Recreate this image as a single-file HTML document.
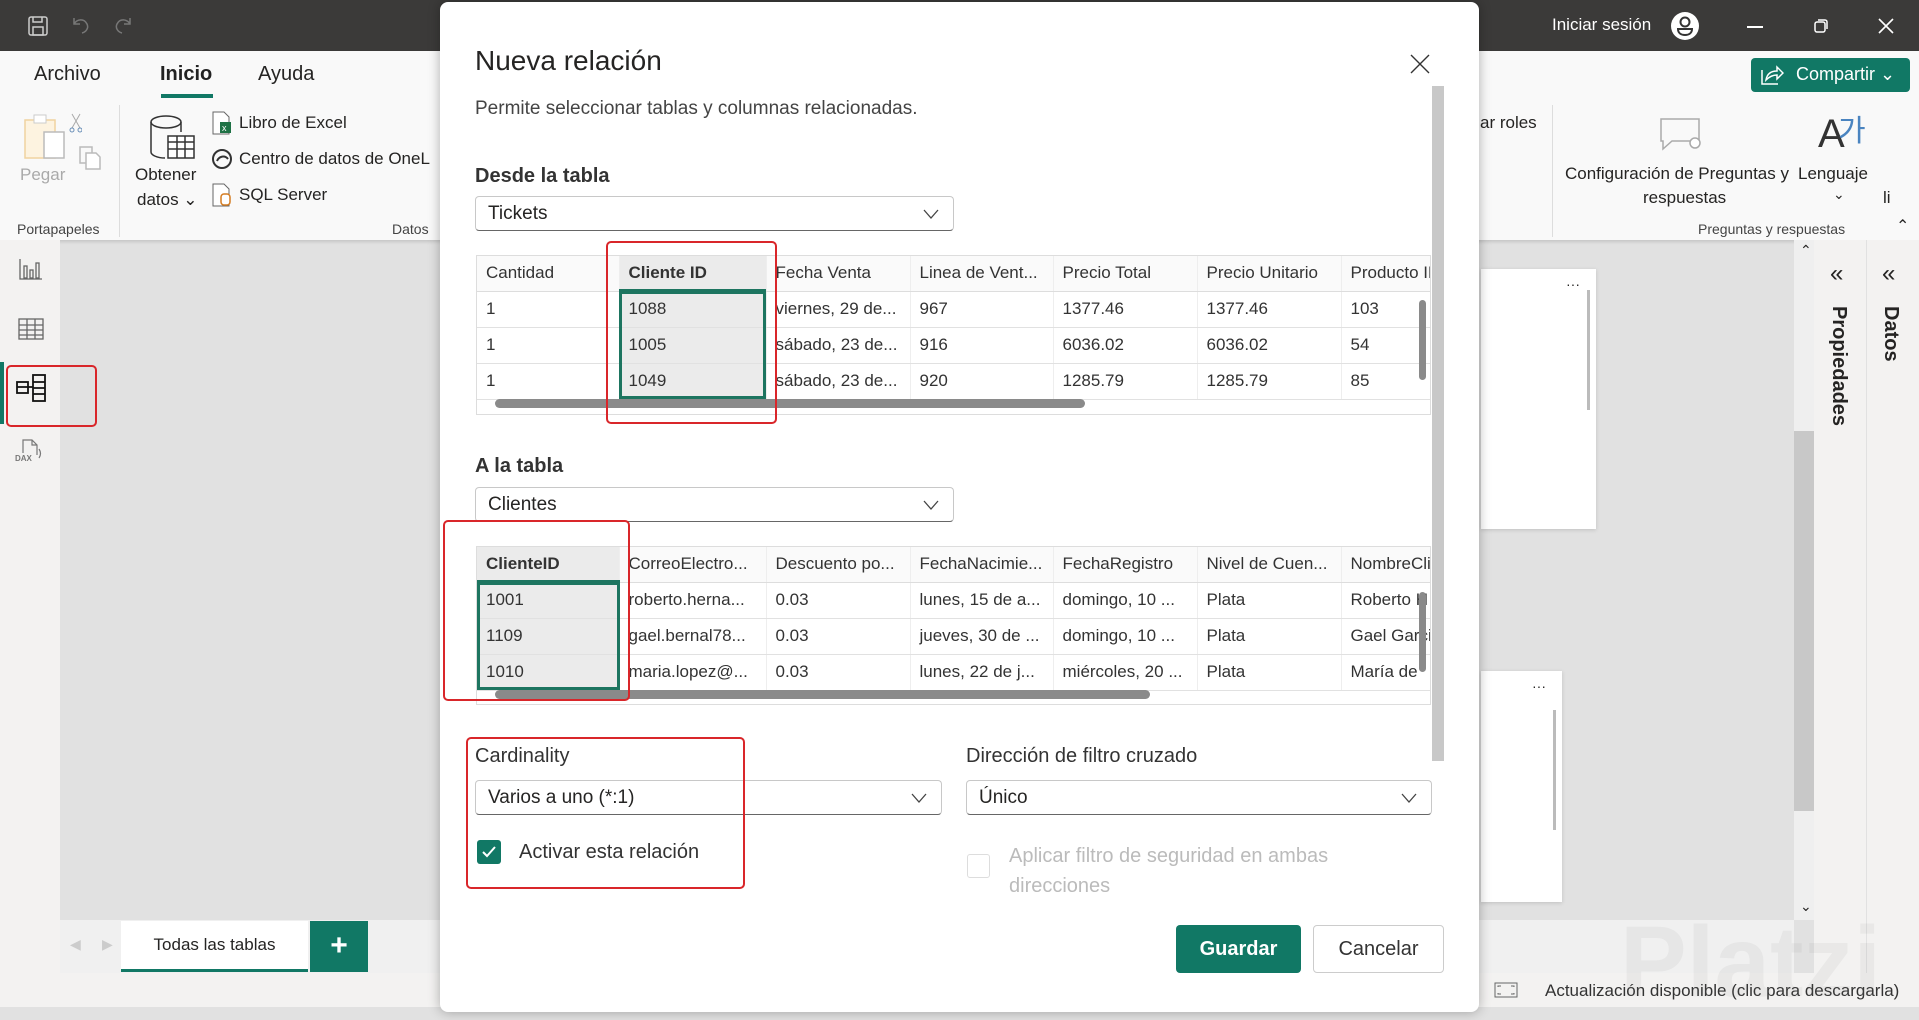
<!DOCTYPE html>
<html><head><meta charset="utf-8"><style>
*{box-sizing:border-box;margin:0;padding:0}
body{width:1919px;height:1007px;position:relative;overflow:hidden;font-family:"Liberation Sans",sans-serif;background:#e1e1e1;color:#252423}
.a{position:absolute;white-space:nowrap}
.dd{position:absolute;border:1px solid #c8c8c8;border-bottom:1px solid #666;border-radius:4px;background:#fff;font-size:19px;padding-left:12px;line-height:33px}
.dd .ch{position:absolute;right:14px;top:8px;width:16px;height:16px}
table{border-collapse:collapse;table-layout:fixed;font-size:17px;color:#333}
td{height:36px;padding-left:9px;border-bottom:1px solid #e1e1e1;border-right:1px solid #eee;overflow:hidden;white-space:nowrap}
tr.h td{height:35px;background:#fafafa;border-bottom:1px solid #ddd}
.sel{background:#ebebeb !important}
.red{position:absolute;border:2px solid #d9262a;border-radius:5px}
</style></head><body>
<!-- title bar -->
<div class="a" style="left:0;top:0;width:1919px;height:51px;background:#3b3a39"></div>
<svg class="a" style="left:26px;top:14px" width="24" height="24" viewBox="0 0 24 24" fill="none" stroke="#ccc" stroke-width="1.5"><rect x="3" y="3" width="18" height="18" rx="2"/><rect x="7" y="13" width="10" height="8"/><path d="M7 3v5h9V3"/></svg>
<svg class="a" style="left:70px;top:14px" width="22" height="22" viewBox="0 0 22 22" fill="none" stroke="#777" stroke-width="1.5"><path d="M4 4v6h6M4 10c3-5 10-6 13 0 2 4-1 8-5 9"/></svg>
<svg class="a" style="left:112px;top:14px" width="22" height="22" viewBox="0 0 22 22" fill="none" stroke="#777" stroke-width="1.5"><path d="M18 4v6h-6M18 10c-3-5-10-6-13 0-2 4 1 8 5 9"/></svg>
<div class="a" style="left:1552px;top:15px;color:#fff;font-size:17px">Iniciar sesión</div>
<svg class="a" style="left:1670px;top:11px" width="30" height="30" viewBox="0 0 30 30"><circle cx="15" cy="15" r="14" fill="#fff"/><circle cx="15" cy="11" r="4.5" fill="none" stroke="#333" stroke-width="2"/><path d="M8 18h14c0 4-3 6-7 6s-7-2-7-6z" fill="none" stroke="#333" stroke-width="2"/></svg>
<div class="a" style="left:1747px;top:26px;width:16px;height:1.5px;background:#fff"></div>
<svg class="a" style="left:1813px;top:18px" width="16" height="16" viewBox="0 0 16 16" fill="none" stroke="#fff" stroke-width="1.5"><rect x="2" y="4" width="10" height="10" rx="2"/><path d="M5 2h7a2 2 0 0 1 2 2v7"/></svg>
<svg class="a" style="left:1878px;top:18px" width="16" height="16" viewBox="0 0 16 16" stroke="#fff" stroke-width="1.6"><path d="M1 1l14 14M15 1L1 15"/></svg>
<!-- ribbon -->
<div class="a" style="left:0;top:51px;width:1919px;height:189px;background:#f9f9f9;box-shadow:0 2px 3px rgba(0,0,0,.12)"></div>
<div class="a" style="left:34px;top:63px;font-size:20px">Archivo</div>
<div class="a" style="left:160px;top:63px;font-size:20px;font-weight:bold;color:#222">Inicio</div>
<div class="a" style="left:161px;top:94px;width:52px;height:4px;background:#117865"></div>
<div class="a" style="left:258px;top:63px;font-size:20px">Ayuda</div>
<svg class="a" style="left:22px;top:112px" width="60" height="50" viewBox="0 0 60 50" fill="none"><rect x="3" y="8" width="30" height="38" fill="#fdf3e0" stroke="#f0d3a0" stroke-width="1.5"/><rect x="12" y="3" width="12" height="8" fill="#fff" stroke="#ccc"/><rect x="22" y="20" width="20" height="26" fill="#fff" stroke="#bbb" stroke-width="1.5"/><path d="M58 2l-8 14M50 2l8 14" stroke="#aaa"/><circle cx="50" cy="18" r="2" stroke="#6a8fb8"/><circle cx="58" cy="18" r="2" stroke="#6a8fb8"/></svg>
<svg class="a" style="left:78px;top:145px" width="24" height="26" viewBox="0 0 24 26" fill="none" stroke="#bbb" stroke-width="1.5"><rect x="2" y="2" width="12" height="16"/><path d="M8 8h10l4 4v12H8z" fill="#fff"/></svg>
<div class="a" style="left:20px;top:165px;font-size:17px;color:#aaa">Pegar</div>
<div class="a" style="left:17px;top:221px;font-size:14px;color:#444">Portapapeles</div>
<div class="a" style="left:119px;top:105px;width:1px;height:132px;background:#ddd"></div>
<svg class="a" style="left:148px;top:114px" width="48" height="48" viewBox="0 0 48 48" fill="none" stroke="#333" stroke-width="1.5"><ellipse cx="18" cy="8" rx="15" ry="6"/><path d="M3 8v30c0 3 6 6 14 6M33 8v10"/><rect x="20" y="22" width="26" height="22" fill="#fff"/><path d="M20 28h26M20 35h26M29 22v22M37 22v22"/></svg>
<div class="a" style="left:135px;top:165px;font-size:17px">Obtener</div>
<div class="a" style="left:137px;top:190px;font-size:17px">datos ⌄</div>
<svg class="a" style="left:211px;top:111px" width="22" height="24" viewBox="0 0 22 24"><path d="M2 1h11l5 5v17H2z" fill="#fff" stroke="#666"/><rect x="9" y="11" width="11" height="11" fill="#1e7145"/><text x="11" y="20" font-size="9" fill="#fff" font-family="Liberation Sans">x</text></svg>
<div class="a" style="left:239px;top:113px;font-size:17px">Libro de Excel</div>
<svg class="a" style="left:211px;top:148px" width="22" height="22" viewBox="0 0 22 22" fill="none" stroke="#333" stroke-width="2"><circle cx="11" cy="11" r="9"/><path d="M6 13c2-5 8-6 11-2"/></svg>
<div class="a" style="left:239px;top:149px;font-size:17px">Centro de datos de OneL</div>
<svg class="a" style="left:211px;top:183px" width="22" height="24" viewBox="0 0 22 24" fill="none"><path d="M2 1h11l5 5v17H2z" fill="#fff" stroke="#666"/><rect x="10" y="11" width="9" height="11" rx="3" stroke="#d47b20" stroke-width="1.5" fill="#fff"/></svg>
<div class="a" style="left:239px;top:185px;font-size:17px">SQL Server</div>
<div class="a" style="left:392px;top:221px;font-size:14px;color:#444">Datos</div>
<!-- ribbon right -->
<div class="a" style="left:1751px;top:58px;width:159px;height:34px;background:#117865;border-radius:4px"></div>
<svg class="a" style="left:1760px;top:64px" width="24" height="22" viewBox="0 0 24 22" fill="none" stroke="#fff" stroke-width="1.5"><path d="M2 6v14h16"/><path d="M6 16c1-6 5-9 11-9V3l6 6-6 6v-4c-5 0-8 2-11 5z"/></svg>
<div class="a" style="left:1796px;top:64px;color:#fff;font-size:18px">Compartir ⌄</div>
<div class="a" style="left:1480px;top:113px;font-size:17px">ar roles</div>
<div class="a" style="left:1552px;top:105px;width:1px;height:132px;background:#ddd"></div>
<svg class="a" style="left:1658px;top:117px" width="46" height="36" viewBox="0 0 46 36" fill="none" stroke="#aaa" stroke-width="1.5"><path d="M3 2h38v22H14l-9 8v-8H3z"/><circle cx="37" cy="26" r="5" fill="#fff"/></svg>
<div class="a" style="left:1818px;top:112px;font-size:40px;color:#333;font-weight:300">A</div>
<div class="a" style="left:1838px;top:106px;font-size:30px;color:#4a84c0">가</div>
<div class="a" style="left:1565px;top:164px;font-size:17px">Configuración de Preguntas y</div>
<div class="a" style="left:1798px;top:164px;font-size:17px">Lenguaje</div>
<div class="a" style="left:1643px;top:188px;font-size:17px">respuestas</div>
<div class="a" style="left:1833px;top:186px;font-size:14px">⌄</div>
<div class="a" style="left:1883px;top:188px;font-size:17px">li</div>
<div class="a" style="left:1698px;top:221px;font-size:14px;color:#444">Preguntas y respuestas</div>
<div class="a" style="left:1896px;top:216px;font-size:16px">⌃</div>
<!-- left nav -->
<div class="a" style="left:0;top:240px;width:60px;height:733px;background:#f3f2f1"></div>
<svg class="a" style="left:19px;top:258px" width="24" height="22" viewBox="0 0 24 22" fill="none" stroke="#666" stroke-width="1.3"><path d="M1 1v20h22"/><rect x="5" y="8" width="3" height="12"/><rect x="11" y="12" width="3" height="8"/><rect x="17" y="5" width="3" height="15"/></svg>
<svg class="a" style="left:18px;top:318px" width="26" height="22" viewBox="0 0 26 22" fill="none" stroke="#666" stroke-width="1.3"><rect x="1" y="1" width="24" height="20"/><path d="M1 7h24M1 12h24M1 17h24M9 1v20M17 1v20"/></svg>
<div class="a" style="left:0;top:362px;width:4px;height:62px;background:#117865"></div>
<svg class="a" style="left:16px;top:374px" width="30" height="28" viewBox="0 0 30 28" fill="none" stroke="#111" stroke-width="1.8"><rect x="1" y="8" width="11" height="11"/><path d="M1 13h11M12 13h5"/><rect x="17" y="1" width="12" height="26"/><path d="M17 8h12M17 14h12M17 20h12"/></svg>
<div class="red" style="left:6px;top:365px;width:91px;height:62px"></div>
<svg class="a" style="left:15px;top:437px" width="28" height="26" viewBox="0 0 28 26" fill="none" stroke="#777" stroke-width="1.2"><path d="M8 16V3h9l5 5v10M17 3v5h5M24 12c2 3 2 6 0 9"/><text x="0" y="24" font-size="8" fill="#777" stroke="none" font-family="Liberation Sans" font-weight="bold">DAX</text></svg>
<!-- canvas cards -->
<div class="a" style="left:1481px;top:269px;width:115px;height:260px;background:#fff;box-shadow:0 1px 4px rgba(0,0,0,.15)"></div>
<div class="a" style="left:1566px;top:276px;font-size:14px">···</div>
<div class="a" style="left:1587px;top:290px;width:3px;height:120px;background:#bbb"></div>
<div class="a" style="left:1481px;top:671px;width:81px;height:231px;background:#fff;box-shadow:0 1px 4px rgba(0,0,0,.15)"></div>
<div class="a" style="left:1532px;top:678px;font-size:14px">···</div>
<div class="a" style="left:1553px;top:710px;width:3px;height:120px;background:#bbb"></div>
<div class="a" style="left:1794px;top:240px;width:20px;height:680px;background:#efefef"></div>
<div class="a" style="left:1794px;top:431px;width:20px;height:380px;background:#c8c8c8"></div>
<div class="a" style="left:1800px;top:242px;font-size:14px">⌃</div>
<div class="a" style="left:1800px;top:898px;font-size:14px">⌄</div>
<div class="a" style="left:1814px;top:240px;width:105px;height:733px;background:#f3f2f1"></div>
<div class="a" style="left:1866px;top:240px;width:1px;height:733px;background:#e1e1e1"></div>
<div class="a" style="left:1830px;top:260px;font-size:24px">«</div>
<div class="a" style="left:1882px;top:260px;font-size:24px">«</div>
<div class="a" style="left:1828px;top:306px;font-size:20px;font-weight:bold;transform-origin:0 0;transform:translate(22px,0) rotate(90deg)">Propiedades</div>
<div class="a" style="left:1880px;top:306px;font-size:20px;font-weight:bold;transform-origin:0 0;transform:translate(22px,0) rotate(90deg)">Datos</div>
<!-- bottom tabs -->
<div class="a" style="left:60px;top:920px;width:1734px;height:53px;background:#f0f0f0"></div>
<div class="a" style="left:70px;top:936px;font-size:14px;color:#ccc">◀</div>
<div class="a" style="left:102px;top:936px;font-size:14px;color:#ccc">▶</div>
<div class="a" style="left:121px;top:921px;width:187px;height:51px;background:#fff;border-bottom:3px solid #117865;font-size:17px;text-align:center;line-height:48px">Todas las tablas</div>
<div class="a" style="left:310px;top:921px;width:58px;height:51px;background:#117865;color:#fff;font-size:30px;text-align:center;line-height:50px;font-weight:bold">+</div>
<div class="a" style="left:0;top:973px;width:1919px;height:34px;background:#f3f2f1"></div>
<svg class="a" style="left:1494px;top:982px" width="24" height="16" viewBox="0 0 24 16" fill="none" stroke="#666"><rect x="1" y="1" width="22" height="14"/><path d="M4 5V4h3M20 5V4h-3M4 11v1h3M20 11v1h-3"/></svg>
<div class="a" style="left:1545px;top:981px;font-size:17px;color:#333">Actualización disponible (clic para descargarla)</div>
<div class="a" style="left:1620px;top:905px;font-size:100px;color:rgba(120,120,120,.08);font-weight:bold">Platzi</div>
<!-- dialog -->
<div class="a" style="left:440px;top:2px;width:1039px;height:1010px;background:#fff;border-radius:8px;box-shadow:0 0 12px rgba(0,0,0,.3)"></div>
<div class="a" style="left:475px;top:45px;font-size:28px;color:#252423">Nueva relación</div>
<svg class="a" style="left:1410px;top:54px" width="20" height="20" viewBox="0 0 20 20" stroke="#333" stroke-width="1.4"><path d="M1 1l18 18M19 1L1 19"/></svg>
<div class="a" style="left:1432px;top:86px;width:12px;height:675px;background:#c8c8c8"></div>
<div class="a" style="left:475px;top:98px;font-size:19px;color:#444">Permite seleccionar tablas y columnas relacionadas.</div>
<div class="a" style="left:475px;top:165px;font-size:20px;font-weight:bold;color:#333">Desde la tabla</div>
<div class="dd" style="left:475px;top:196px;width:479px;height:35px">Tickets<svg class="ch" viewBox="0 0 16 16" fill="none" stroke="#444" stroke-width="1.3"><path d="M1 5l7 8 7-8"/></svg></div>
<div class="a" style="left:476px;top:255px;width:955px;height:160px;border:1px solid #ddd;overflow:hidden;background:#fff">
<table style="width:1100px"><colgroup><col style="width:142px"><col style="width:147px"><col style="width:144px"><col style="width:143px"><col style="width:144px"><col style="width:144px"><col style="width:236px"></colgroup>
<tr class="h"><td>Cantidad</td><td class="sel" style="font-weight:bold">Cliente ID</td><td>Fecha Venta</td><td>Linea de Vent...</td><td>Precio Total</td><td>Precio Unitario</td><td>Producto ID</td></tr>
<tr><td>1</td><td class="sel">1088</td><td>viernes, 29 de...</td><td>967</td><td>1377.46</td><td>1377.46</td><td>103</td></tr>
<tr><td>1</td><td class="sel">1005</td><td>sábado, 23 de...</td><td>916</td><td>6036.02</td><td>6036.02</td><td>54</td></tr>
<tr><td>1</td><td class="sel">1049</td><td>sábado, 23 de...</td><td>920</td><td>1285.79</td><td>1285.79</td><td>85</td></tr>
</table></div>
<div class="a" style="left:619px;top:289px;width:147px;height:110px;border:3px solid #1d7560;border-top-width:5px"></div>
<div class="a" style="left:495px;top:399px;width:590px;height:9px;background:#8a8a8a;border-radius:5px"></div>
<div class="a" style="left:1419px;top:300px;width:7px;height:80px;background:#8a8a8a;border-radius:4px"></div>
<div class="red" style="left:606px;top:241px;width:171px;height:183px"></div>
<div class="a" style="left:475px;top:455px;font-size:20px;font-weight:bold;color:#333">A la tabla</div>
<div class="dd" style="left:475px;top:487px;width:479px;height:35px">Clientes<svg class="ch" viewBox="0 0 16 16" fill="none" stroke="#444" stroke-width="1.3"><path d="M1 5l7 8 7-8"/></svg></div>
<div class="a" style="left:476px;top:546px;width:955px;height:159px;border:1px solid #ddd;overflow:hidden;background:#fff">
<table style="width:1100px"><colgroup><col style="width:142px"><col style="width:147px"><col style="width:144px"><col style="width:143px"><col style="width:144px"><col style="width:144px"><col style="width:236px"></colgroup>
<tr class="h"><td class="sel" style="font-weight:bold">ClienteID</td><td>CorreoElectro...</td><td>Descuento po...</td><td>FechaNacimie...</td><td>FechaRegistro</td><td>Nivel de Cuen...</td><td>NombreCliente</td></tr>
<tr><td class="sel">1001</td><td>roberto.herna...</td><td>0.03</td><td>lunes, 15 de a...</td><td>domingo, 10 ...</td><td>Plata</td><td>Roberto H</td></tr>
<tr><td class="sel">1109</td><td>gael.bernal78...</td><td>0.03</td><td>jueves, 30 de ...</td><td>domingo, 10 ...</td><td>Plata</td><td>Gael Garcia</td></tr>
<tr><td class="sel">1010</td><td>maria.lopez@...</td><td>0.03</td><td>lunes, 22 de j...</td><td>miércoles, 20 ...</td><td>Plata</td><td>María de</td></tr>
</table></div>
<div class="a" style="left:477px;top:580px;width:143px;height:110px;border:3px solid #1d7560;border-top-width:5px"></div>
<div class="a" style="left:495px;top:690px;width:655px;height:9px;background:#8a8a8a;border-radius:5px"></div>
<div class="a" style="left:1419px;top:592px;width:7px;height:80px;background:#8a8a8a;border-radius:4px"></div>
<div class="red" style="left:443px;top:520px;width:187px;height:181px"></div>
<div class="a" style="left:475px;top:745px;font-size:20px;color:#333">Cardinality</div>
<div class="a" style="left:966px;top:745px;font-size:20px;color:#333">Dirección de filtro cruzado</div>
<div class="dd" style="left:475px;top:780px;width:467px;height:35px">Varios a uno (*:1)<svg class="ch" viewBox="0 0 16 16" fill="none" stroke="#444" stroke-width="1.3"><path d="M1 5l7 8 7-8"/></svg></div>
<div class="dd" style="left:966px;top:780px;width:466px;height:35px">Único<svg class="ch" viewBox="0 0 16 16" fill="none" stroke="#444" stroke-width="1.3"><path d="M1 5l7 8 7-8"/></svg></div>
<div class="a" style="left:477px;top:840px;width:24px;height:24px;background:#117865;border-radius:3px"></div>
<svg class="a" style="left:481px;top:845px" width="16" height="14" viewBox="0 0 16 14" fill="none" stroke="#fff" stroke-width="2"><path d="M2 7l4 4 8-9"/></svg>
<div class="a" style="left:519px;top:841px;font-size:20px;color:#333">Activar esta relación</div>
<div class="red" style="left:466px;top:737px;width:279px;height:152px"></div>
<div class="a" style="left:967px;top:854px;width:23px;height:24px;border:1px solid #ddd;border-radius:3px"></div>
<div class="a" style="left:1009px;top:841px;font-size:20px;color:#bbb;line-height:30px">Aplicar filtro de seguridad en ambas<br>direcciones</div>
<div class="a" style="left:1176px;top:925px;width:125px;height:48px;background:#117865;border-radius:4px;color:#fff;font-size:20px;font-weight:bold;text-align:center;line-height:48px">Guardar</div>
<div class="a" style="left:1313px;top:925px;width:131px;height:48px;border:1px solid #ccc;border-radius:4px;color:#333;font-size:20px;text-align:center;line-height:46px">Cancelar</div>
</body></html>
